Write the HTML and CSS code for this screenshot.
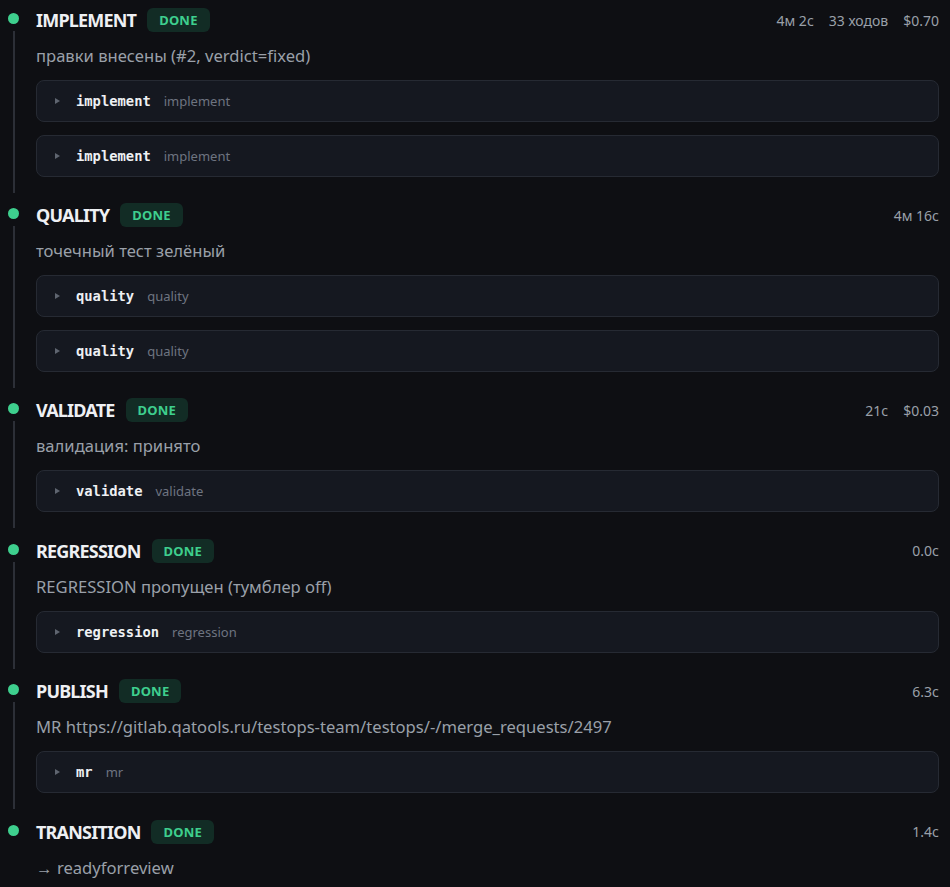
FILE: index.html
```html
<!DOCTYPE html>
<html lang="ru">
<head>
<meta charset="utf-8">
<title>Pipeline</title>
<link rel="stylesheet" href="styles.css">
</head>
<body>
<div class="timeline">

  <section class="step">
    <div class="rail"><span class="dot"></span><span class="line"></span></div>
    <div class="content">
      <div class="head">
        <h2 class="title">IMPLEMENT</h2>
        <span class="badge">DONE</span>
        <div class="meta"><span>4м 2с</span><span>33 ходов</span><span>$0.70</span></div>
      </div>
      <p class="summary">правки внесены (#2, verdict=fixed)</p>
      <div class="run"><svg class="caret" width="5" height="6" viewBox="0 0 5 6"><path d="M0 0L5 3L0 6Z"/></svg><code class="name">implement</code><span class="label">implement</span></div>
      <div class="run"><svg class="caret" width="5" height="6" viewBox="0 0 5 6"><path d="M0 0L5 3L0 6Z"/></svg><code class="name">implement</code><span class="label">implement</span></div>
    </div>
  </section>

  <section class="step">
    <div class="rail"><span class="dot"></span><span class="line"></span></div>
    <div class="content">
      <div class="head">
        <h2 class="title">QUALITY</h2>
        <span class="badge">DONE</span>
        <div class="meta"><span>4м 16с</span></div>
      </div>
      <p class="summary">точечный тест зелёный</p>
      <div class="run"><svg class="caret" width="5" height="6" viewBox="0 0 5 6"><path d="M0 0L5 3L0 6Z"/></svg><code class="name">quality</code><span class="label">quality</span></div>
      <div class="run"><svg class="caret" width="5" height="6" viewBox="0 0 5 6"><path d="M0 0L5 3L0 6Z"/></svg><code class="name">quality</code><span class="label">quality</span></div>
    </div>
  </section>

  <section class="step">
    <div class="rail"><span class="dot"></span><span class="line"></span></div>
    <div class="content">
      <div class="head">
        <h2 class="title">VALIDATE</h2>
        <span class="badge">DONE</span>
        <div class="meta"><span>21с</span><span>$0.03</span></div>
      </div>
      <p class="summary">валидация: принято</p>
      <div class="run"><svg class="caret" width="5" height="6" viewBox="0 0 5 6"><path d="M0 0L5 3L0 6Z"/></svg><code class="name">validate</code><span class="label">validate</span></div>
    </div>
  </section>

  <section class="step">
    <div class="rail"><span class="dot"></span><span class="line"></span></div>
    <div class="content">
      <div class="head">
        <h2 class="title">REGRESSION</h2>
        <span class="badge">DONE</span>
        <div class="meta"><span>0.0с</span></div>
      </div>
      <p class="summary">REGRESSION пропущен (тумблер off)</p>
      <div class="run"><svg class="caret" width="5" height="6" viewBox="0 0 5 6"><path d="M0 0L5 3L0 6Z"/></svg><code class="name">regression</code><span class="label">regression</span></div>
    </div>
  </section>

  <section class="step">
    <div class="rail"><span class="dot"></span><span class="line"></span></div>
    <div class="content">
      <div class="head">
        <h2 class="title">PUBLISH</h2>
        <span class="badge">DONE</span>
        <div class="meta"><span>6.3с</span></div>
      </div>
      <p class="summary">MR https://gitlab.qatools.ru/testops-team/testops/-/merge_requests/2497</p>
      <div class="run"><svg class="caret" width="5" height="6" viewBox="0 0 5 6"><path d="M0 0L5 3L0 6Z"/></svg><code class="name">mr</code><span class="label">mr</span></div>
    </div>
  </section>

  <section class="step last">
    <div class="rail"><span class="dot"></span></div>
    <div class="content">
      <div class="head">
        <h2 class="title">TRANSITION</h2>
        <span class="badge">DONE</span>
        <div class="meta"><span>1.4с</span></div>
      </div>
      <p class="summary">→ readyforreview</p>
    </div>
  </section>

</div>
</body>
</html>
```

FILE: styles.css
```css
html, body {
  margin: 0;
  padding: 0;
  background: #0e0f13;
}

body {
  font-family: "Noto Sans", "Open Sans", sans-serif;
  color: #e6e8ec;
}

.timeline {
  padding: 8px 11px 0 8px;
}

.step {
  display: grid;
  grid-template-columns: 11px 1fr;
  column-gap: 17px;
  padding-bottom: 26.5px;
}

.step.last {
  padding-bottom: 0;
}

.rail {
  display: flex;
  flex-direction: column;
  align-items: center;
}

.dot {
  width: 11px;
  height: 11px;
  margin-top: 5px;
  border-radius: 50%;
  background: #3ecf8e;
  flex: none;
}

.line {
  width: 2px;
  flex: 1;
  margin-top: 7px;
  margin-bottom: -16px;
  background: #2c2f37;
}

.content {
  display: flex;
  flex-direction: column;
  min-width: 0;
}

.head {
  display: flex;
  align-items: center;
  height: 24px;
}

.title {
  margin: 0;
  font-size: 18px;
  font-weight: 700;
  letter-spacing: -0.8px;
  color: #eef0f3;
}

.badge {
  margin-left: 11px;
  height: 24px;
  padding: 0 12px;
  display: flex;
  align-items: center;
  border-radius: 6px;
  background: #122c25;
  color: #3ecf8e;
  font-size: 13px;
  font-weight: 700;
  letter-spacing: 0.2px;
}

.meta {
  margin-left: auto;
  display: flex;
  gap: 15px;
  font-size: 14px;
  color: #9aa0a9;
}

.summary {
  margin: 12px 0 12px;
  font-size: 16.6px;
  line-height: 24px;
  color: #9aa0a9;
}

.run {
  display: flex;
  align-items: center;
  height: 40px;
  margin-bottom: 12.5px;
  padding-left: 18px;
  border: 1px solid #262a33;
  border-radius: 8px;
  background: #151820;
}

.run:last-child {
  margin-bottom: 0;
}

.caret {
  fill: #5f6570;
  flex: none;
}

.name {
  margin-left: 16px;
  font-family: "DejaVu Sans Mono", "Liberation Mono", monospace;
  font-size: 13.8px;
  font-weight: 700;
  color: #eef0f3;
}

.label {
  margin-left: 13px;
  font-size: 13px;
  color: #6e7480;
}
```
